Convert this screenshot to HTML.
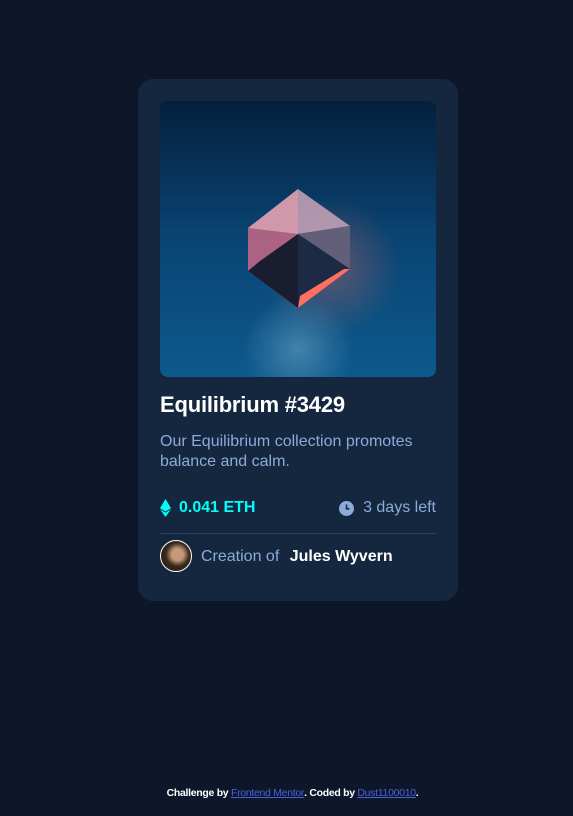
<!DOCTYPE html>
<html><head><style>
*{margin:0;padding:0;box-sizing:border-box}
body{width:573px;height:816px;background:#0d1729;font-family:"Liberation Sans",sans-serif;position:relative;overflow:hidden}
.card{position:absolute;left:138px;top:79px;width:320px;height:522px;background:#15263f;border-radius:15px}
.img{position:absolute;left:22px;top:22px;width:276px;height:276px;border-radius:8px;overflow:hidden}
h1{position:absolute;left:22px;top:313px;color:#fff;font-size:22px;font-weight:bold;letter-spacing:-0.2px}
.desc{position:absolute;left:22px;top:353px;width:270px;color:#8bacd9;font-size:16px;line-height:20px}
.eth{position:absolute;left:22px;top:420px;color:#00fff8;font-weight:bold;font-size:16px;display:flex;align-items:center;gap:8px}
.days{position:absolute;right:22px;top:420px;color:#8bacd9;font-size:16px;display:flex;align-items:center;gap:9px}
.hr{position:absolute;left:22px;right:22px;top:454px;height:1px;background:#2e405a}
.av{position:absolute;left:22px;top:461px;width:32px;height:32px;border-radius:50%;border:1.5px solid #fff;background:radial-gradient(circle at 55% 45%,#c49a7a 0 25%,#3a2a1e 50%,#1a120c 100%)}
.cr{position:absolute;left:63px;top:469px;color:#8bacd9;font-size:16px}
.cr b{color:#fff;margin-left:6px}
.foot{position:absolute;top:787px;width:100%;padding-left:12px;text-align:center;color:#fff;font-size:10.5px;font-weight:bold;letter-spacing:-0.3px}
.foot a{color:#4f5fd9;text-decoration:underline;font-weight:normal}
</style></head><body>
<div class="card">
<div class="img"><svg width="276" height="276" viewBox="0 0 276 276">
<defs>
<linearGradient id="bg" x1="0" y1="0" x2="0" y2="1"><stop offset="0" stop-color="#03203d"/><stop offset=".5" stop-color="#0a4473"/><stop offset="1" stop-color="#0c5a8c"/></linearGradient>
<radialGradient id="gl" cx=".62" cy=".6" r=".25"><stop offset="0" stop-color="#ff6a5a" stop-opacity=".35"/><stop offset="1" stop-color="#ff6a5a" stop-opacity="0"/></radialGradient>
<radialGradient id="rf" cx=".5" cy=".9" rx=".15" r=".2"><stop offset="0" stop-color="#6fa6c8" stop-opacity=".55"/><stop offset="1" stop-color="#6fa6c8" stop-opacity="0"/></radialGradient>
</defs>
<rect width="276" height="276" fill="url(#bg)"/>
<rect width="276" height="276" fill="url(#gl)"/>
<rect width="276" height="276" fill="url(#rf)"/>
<polygon points="138,88 88,127 138,133 190,125" fill="#c9a6b8" opacity=".85"/>
<polygon points="88,127 138,133 138,207 88,170" fill="#d26a86" opacity=".8"/>
<polygon points="138,133 190,125 190,168 138,207" fill="#1c2a44"/>
<polygon points="88,127 138,88 138,133" fill="#e09aaa" opacity=".7"/>
<polygon points="138,133 190,125 190,168" fill="#9b8aa6" opacity=".55"/>
<polygon points="88,170 138,207 138,133 100,160" fill="#1a1c30"/>
<polygon points="138,207 190,168 184,168 140,195" fill="#ff7060"/>
</svg></div>
<h1>Equilibrium #3429</h1>
<p class="desc">Our Equilibrium collection promotes balance and calm.</p>
<div class="eth"><svg width="11" height="18" viewBox="0 0 11 18"><path d="M5.5 0L11 9.2 5.5 12.5 0 9.2z" fill="#00fff8"/><path d="M5.5 13.6L11 10.3 5.5 18 0 10.3z" fill="#00fff8"/></svg>0.041 ETH</div>
<div class="days"><svg width="15" height="15" viewBox="0 0 15 15"><circle cx="7.5" cy="7.5" r="7.5" fill="#8bacd9"/><path d="M7.5 3.5v4.3h3" stroke="#15263f" stroke-width="1.6" fill="none"/></svg>3 days left</div>
<div class="hr"></div>
<div class="av"></div>
<div class="cr">Creation of <b>Jules Wyvern</b></div>
</div>
<div class="foot">Challenge by <a>Frontend Mentor</a>. Coded by <a>Dust1100010</a>.</div>
</body></html>
